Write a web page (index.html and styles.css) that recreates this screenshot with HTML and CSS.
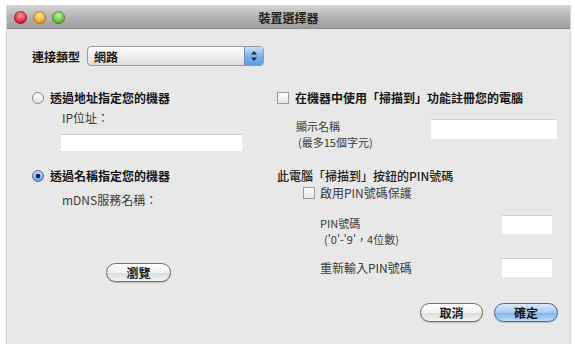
FILE: index.html
```html
<!DOCTYPE html>
<html lang="zh-Hant">
<head>
    <meta charset="UTF-8">
    <title>裝置選擇器</title>
    <link rel="stylesheet" href="styles.css">
</head>
<body>
    <div class="window">
        <div class="titlebar">
            <div class="lights">
                <span class="light red"></span>
                <span class="light yellow"></span>
                <span class="light green"></span>
            </div>
            <div class="title">裝置選擇器</div>
        </div>
        <div class="content">
            <div class="type-row">
                <span class="label-strong">連接類型</span>
                <div class="select">
                    <span class="select-text">網路</span>
                    <span class="stepper">
                        <svg width="8" height="12" viewBox="0 0 8 12">
                            <path d="M4 1 L7 4.5 L1 4.5 Z" fill="#1d2a44"/>
                            <path d="M4 11 L7 7.5 L1 7.5 Z" fill="#1d2a44"/>
                        </svg>
                    </span>
                </div>
            </div>
            <div class="columns">
                <div class="col-left">
                    <div class="option">
                        <span class="radio"></span>
                        <span class="label-strong">透過地址指定您的機器</span>
                    </div>
                    <div class="sub-label ip-label">IP位址：</div>
                    <input class="field ip-field" type="text">
                    <div class="option option-name">
                        <span class="radio checked"></span>
                        <span class="label-strong">透過名稱指定您的機器</span>
                    </div>
                    <div class="sub-label mdns-label">mDNS服務名稱：</div>
                    <button class="btn browse">瀏覽</button>
                </div>
                <div class="col-right">
                    <div class="option">
                        <span class="checkbox"></span>
                        <span class="label-strong">在機器中使用「掃描到」功能註冊您的電腦</span>
                    </div>
                    <div class="field-row display-row">
                        <div class="sub-label stack">
                            <div>顯示名稱</div>
                            <div class="indent">(最多15個字元)</div>
                        </div>
                        <input class="field name-field" type="text">
                    </div>
                    <div class="label-mid pin-heading">此電腦「掃描到」按鈕的PIN號碼</div>
                    <div class="option pin-enable">
                        <span class="checkbox"></span>
                        <span class="sub-label">啟用PIN號碼保護</span>
                    </div>
                    <div class="field-row pin-row">
                        <div class="sub-label stack">
                            <div>PIN號碼</div>
                            <div class="indent">('0'-'9'，4位數)</div>
                        </div>
                        <input class="field pin-field" type="text">
                    </div>
                    <div class="field-row repin-row">
                        <div class="sub-label">重新輸入PIN號碼</div>
                        <input class="field pin-field" type="text">
                    </div>
                </div>
            </div>
            <div class="footer">
                <button class="btn">取消</button>
                <button class="btn default">確定</button>
            </div>
        </div>
    </div>
</body>
</html>
```

FILE: styles.css
```css
body {
    margin: 0;
    padding: 0;
    background-color: #fff;
    font-family: "Noto Sans CJK TC", "Liberation Sans", sans-serif;
    font-size: 12px;
    color: #1a1a1a;
}
.window {
    margin: 6px 0 0 7px;
    width: 563px;
    height: 338px;
    background-color: #e8e8e8;
    box-shadow: 0 0 0 1px #d8d8d8, 0 1px 2px #aaa;
    display: flex;
    flex-direction: column;
}
.titlebar {
    height: 22px;
    background: linear-gradient(#d2d2d2, #b4b4b4 50%, #9e9e9e);
    border-bottom: 1px solid #8a8a8a;
    display: flex;
    align-items: center;
    position: relative;
}
.lights {
    display: flex;
    gap: 6px;
    padding-left: 7px;
}
.light {
    width: 13px;
    height: 13px;
    border-radius: 50%;
    box-shadow: inset 0 0 0 1px rgba(0, 0, 0, 0.25);
}
.red {
    background: radial-gradient(circle at 50% 35%, #ff9aa5, #e0233a 60%, #a8101f);
}
.yellow {
    background: radial-gradient(circle at 50% 35%, #ffe6a0, #eaa51e 60%, #b47510);
}
.green {
    background: radial-gradient(circle at 50% 35%, #c7f3a0, #69b83a 60%, #3f8a1e);
}
.title {
    position: absolute;
    left: 0;
    right: 0;
    text-align: center;
    font-weight: bold;
    color: #222;
    pointer-events: none;
}
.content {
    flex: 1;
    padding: 17px 13px 0 25px;
    display: flex;
    flex-direction: column;
}
.label-strong {
    font-weight: bold;
    color: #151515;
}
.label-mid {
    font-weight: 500;
    color: #222;
}
.sub-label {
    color: #3a3a3a;
}
.type-row {
    display: flex;
    align-items: center;
    gap: 7px;
    height: 20px;
}
.select {
    width: 177px;
    height: 20px;
    box-sizing: border-box;
    border: 1px solid #9a9a9a;
    border-radius: 4px;
    background: linear-gradient(#ffffff, #ececec 55%, #dcdcdc);
    display: flex;
    align-items: center;
    overflow: hidden;
}
.select-text {
    flex: 1;
    padding-left: 6px;
    font-weight: bold;
}
.stepper {
    width: 18px;
    height: 100%;
    background: linear-gradient(#c8e0fa, #7fb2ec 50%, #5f9be3);
    border-left: 1px solid #6f8fb8;
    display: flex;
    align-items: center;
    justify-content: center;
}
.columns {
    margin-top: 24px;
    display: grid;
    grid-template-columns: 245px 280px;
}
.col-left, .col-right {
    display: flex;
    flex-direction: column;
    align-items: flex-start;
}
.option {
    display: flex;
    align-items: center;
    gap: 6px;
    height: 16px;
    line-height: 16px;
}
.radio {
    width: 12px;
    height: 12px;
    box-sizing: border-box;
    border-radius: 50%;
    border: 1px solid #8a8a8a;
    background: linear-gradient(#ffffff, #e4e4e4);
}
.radio.checked {
    border-color: #4a6c9c;
    background: radial-gradient(circle, #1b2235 0 2px, transparent 2.5px), linear-gradient(#bcd8f6, #6aa2e6);
}
.checkbox {
    width: 10px;
    height: 10px;
    border: 1px solid #9a9a9a;
    background: linear-gradient(#ffffff, #e6e6e6);
}
.ip-label {
    margin-top: 4px;
    padding-left: 30px;
    line-height: 16px;
}
.field {
    display: block;
    box-sizing: border-box;
    margin: 0;
    padding: 0;
    border: none;
    background-color: #fff;
    box-shadow: inset 0 1px 0 #cfcfcf;
}
.ip-field {
    margin: 8px 0 0 29px;
    width: 181px;
    height: 17px;
}
.option-name {
    margin-top: 17px;
}
.mdns-label {
    margin-top: 8px;
    padding-left: 30px;
    line-height: 16px;
}
.btn {
    font-family: inherit;
    font-size: 12px;
    font-weight: bold;
    color: #1a1a1a;
    height: 19px;
    width: 63px;
    padding: 0;
    border: 1px solid #6e6e6e;
    border-radius: 10px;
    background: linear-gradient(#ffffff, #f2f2f2 50%, #dadada 51%, #f4f4f4);
    box-shadow: 0 1px 1px rgba(0, 0, 0, 0.2);
}
.btn.default {
    width: 64px;
    border-color: #3f6ea8;
    background: linear-gradient(#dcebfc, #a6cbf3 50%, #7db2ee 51%, #b9dafb);
}
.browse {
    margin: 55px 0 0 74px;
    width: 65px;
}
.field-row {
    display: flex;
    width: 100%;
    align-items: flex-start;
}
.stack {
    font-size: 11px;
    line-height: 16px;
}
.indent {
    padding-left: 2px;
}
.display-row {
    margin-top: 12px;
    padding-left: 19px;
    box-sizing: border-box;
}
.name-field {
    margin: 1px 0 0 auto;
    width: 126px;
    height: 20px;
}
.pin-heading {
    margin-top: 18px;
    line-height: 16px;
}
.pin-enable {
    margin-top: 1px;
    padding-left: 26px;
    gap: 5px;
}
.pin-row {
    margin-top: 14px;
    padding-left: 43px;
    padding-right: 5px;
    box-sizing: border-box;
}
.pin-row .indent {
    padding-left: 4px;
}
.pin-field {
    margin-left: auto;
    width: 50px;
    height: 19px;
}
.repin-row {
    margin-top: 11px;
    padding-left: 43px;
    padding-right: 5px;
    box-sizing: border-box;
    align-items: center;
}
.footer {
    margin-top: 21px;
    margin-right: -1px;
    display: flex;
    justify-content: flex-end;
    gap: 11px;
}
```
